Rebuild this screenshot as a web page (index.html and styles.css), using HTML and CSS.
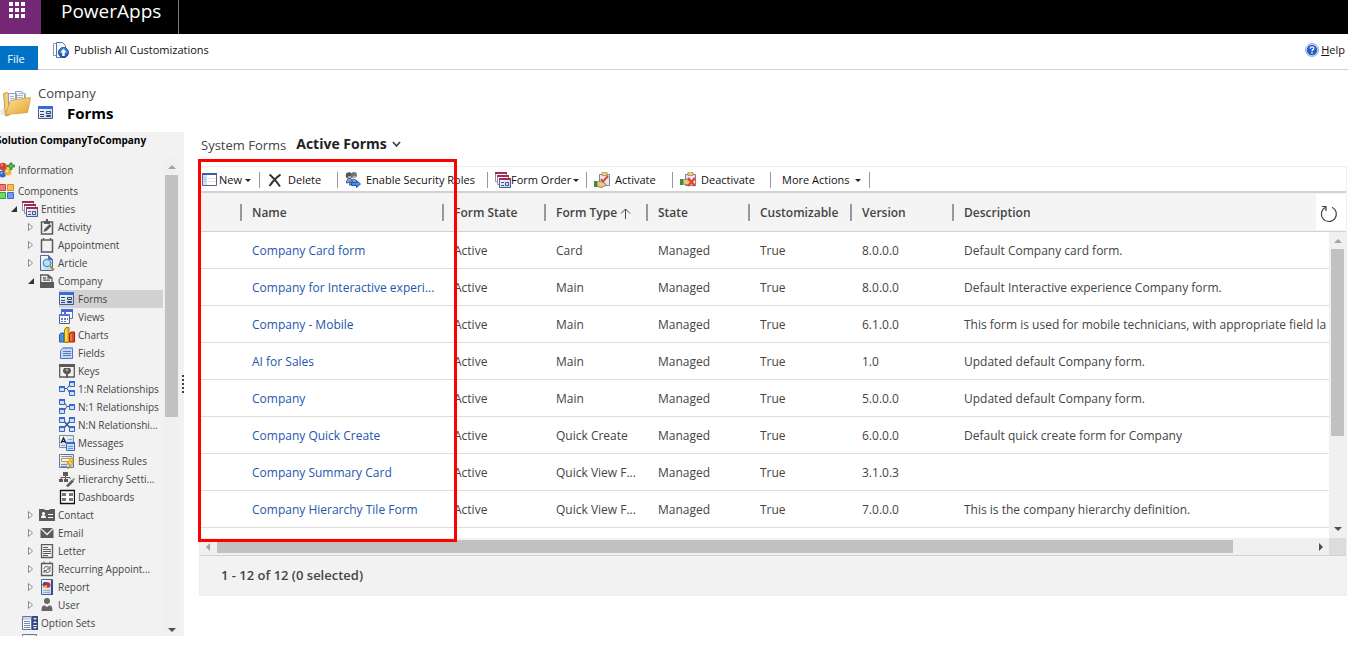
FILE: index.html
```html
<!DOCTYPE html>
<html lang="en">
<head>
<meta charset="utf-8">
<title>PowerApps - Solution CompanyToCompany</title>
<link rel="stylesheet" href="styles.css">
</head>
<body>
<svg class="defs" aria-hidden="true">
  <defs>
    <linearGradient id="gold" x1="0" y1="0" x2="1" y2="1"><stop offset="0" stop-color="#fbe3a0"/><stop offset="1" stop-color="#e3a52e"/></linearGradient>
    <linearGradient id="blue" x1="0" y1="0" x2="0" y2="1"><stop offset="0" stop-color="#5a94e4"/><stop offset="1" stop-color="#174fae"/></linearGradient>
    <linearGradient id="pane" x1="0" y1="0" x2="1" y2="1"><stop offset="0" stop-color="#ffffff"/><stop offset="1" stop-color="#bccdea"/></linearGradient>
  </defs>
  <symbol id="i-form" viewBox="0 0 16 16"><path fill="url(#pane)" stroke="#4a5f8f" d="M.5 1.500h14v12H.5z"/><path fill="#3a6bd8" d="M0 1h15v3H0z"/><path stroke="#33456b" fill="none" d="M2 6.500h4M2 9.500h4M2 11.500h4M8.500 6.500h4v2h-4zM8.500 10.500h4v1h-4z"/></symbol>
  <symbol id="i-info" viewBox="0 0 16 16"><path stroke="#8b4a30" stroke-width="2" d="M5 5v7M5 6l5 4"/><circle cx="4" cy="4.500" r="3.800" fill="#d8432b"/><circle cx="3" cy="3" r="1" fill="#f6a090"/><circle cx="3.500" cy="12" r="3.500" fill="#3b66c9"/><circle cx="2.500" cy="11" r="1" fill="#a6c0f7"/><circle cx="9" cy="10" r="3.500" fill="#f2b632"/><circle cx="8" cy="9" r="1" fill="#fff0bd"/><path fill="#5cc34d" stroke="#217a20" stroke-width=".8" d="M11 1h2v2h2.500v2H13v2.500h-2V5H8.500V3H11z"/></symbol>
  <symbol id="i-comp" viewBox="0 0 16 16"><path fill="#ef7a72" stroke="#c8443e" d="M-.5 1.500h7v6h-7z"/><path fill="#f8bf4d" stroke="#cf8f21" d="M8.500 1.500h6v6h-6z"/><path fill="#6fdc62" stroke="#35a436" d="M-.5 9.500h7v6h-7z"/><path fill="#6f9af5" stroke="#416dcc" d="M8.500 9.500h6v6h-6z"/></symbol>
  <symbol id="i-entities" viewBox="0 0 16 16"><path fill="#fff" stroke="#8d8fa8" d="M.5 .5h11v9H.5z"/><path fill="#a32958" d="M0 0h12v2H0z"/><path fill="#fff" stroke="#8d8fa8" d="M2.500 3.500h11v9h-11z"/><path fill="#a32958" d="M2 3h12v2H2z"/><path fill="url(#pane)" stroke="#4b5f95" d="M4.500 6.500h11v9h-11z"/><path fill="#a32958" d="M4 6h12v2H4z"/><path stroke="#41598f" fill="none" d="M6 10.500h3M6 13.500h3M10.500 10.500h3v3h-3z"/></symbol>
  <symbol id="i-activity" viewBox="0 0 16 16"><path fill="none" stroke="#5b5b5b" stroke-width="1.500" d="M2.500 3h11v12h-11z"/><path fill="#5b5b5b" d="M5 2h2V0h2v2h2v3H5zM4.500 13l1-3 5-5 2 2-5 5z"/></symbol>
  <symbol id="i-appt" viewBox="0 0 16 16"><path fill="none" stroke="#5b5b5b" stroke-width="1.500" d="M2.500 3h11v12h-11z"/><path stroke="#5b5b5b" stroke-width="1.500" d="M4.500 1v2M11.500 1v2"/></symbol>
  <symbol id="i-article" viewBox="0 0 16 16"><path fill="url(#pane)" stroke="#50699c" d="M1.500 .5h8l4 4v11h-12z"/><path fill="#5879b8" stroke="#50699c" d="M9.500.5v4h4z"/><circle cx="8" cy="8" r="3.700" fill="#a9e4f9" stroke="#5992b9" stroke-width="1.300"/><path stroke="#c58a2b" stroke-width="2" d="m11 11 4 4"/></symbol>
  <symbol id="i-company" viewBox="0 0 16 16"><path fill="#5b5b5b" d="M1 9h14v6H1z"/><path fill="none" stroke="#5b5b5b" stroke-width="1.300" d="M1.700 9V2H9l4 3v4M9 2v3h3M4 5h3M4 7.200h7"/></symbol>
  <symbol id="i-views" viewBox="0 0 16 16"><path fill="#fff" stroke="#5876b4" d="M2.500.5h11v9h-11z"/><path fill="#3a6bd8" d="M2 0h12v3H2z"/><path fill="#c13bb0" d="M5 3h2v2H5z"/><path fill="#fff" stroke="#45619c" d="M.5 5.500h10v9H.5z"/><path fill="#4b79dc" d="M0 5h11v2H0z"/><path fill="#6681bd" d="M2 9h2v2H2zM5 9h2v2H5zM8 9h1v2H8zM2 12h2v1H2zM5 12h2v1H5z"/></symbol>
  <symbol id="i-charts" viewBox="0 0 16 16"><path fill="#4a91d8" stroke="#255e9d" d="M.5 7.500 2 6h3v9H.5z"/><path fill="#e9bd1f" stroke="#a67b06" d="M5.500 2.500 7 .5h3v15H5.500z"/><path fill="#e34a22" stroke="#9c2609" d="M10.500 6.500 12 5h3.500v10h-5z"/><path stroke="#fff2a1" d="M7 3v11"/><path stroke="#ff9a77" d="M12 7v7"/></symbol>
  <symbol id="i-fields" viewBox="0 0 16 16"><path fill="#c6d8f6" stroke="#5272b5" d="M4.500 2.500h9v11H1.500v-8z"/><path fill="#7f9fdc" d="M4 2h10v2H3z"/><path stroke="#5577bb" d="M4 6.500h8M4 8.500h8M4 10.500h8"/></symbol>
  <symbol id="i-keys" viewBox="0 0 16 16"><path fill="none" stroke="#5b5b5b" stroke-width="1.300" d="M.7 2.500h14.600v11.500H.7z"/><path fill="#5b5b5b" d="M0 1h16v3H0zM5 5h6l1 2v2l-2 2H9v4H7v-4H6L4 9V7z"/><path fill="#fff" d="M7.500 6h1v2h-1z"/></symbol>
  <symbol id="i-rel-1n" viewBox="0 0 16 16"><path fill="none" stroke="#39538b" d="M5 7.500h3l3-4M8 7.500l3 5"/><path fill="#cfe0fb" stroke="#3966ba" d="M.5 5.500h5v5h-5zM10.500.5h5v5h-5zM10.500 9.500h5v5h-5z"/><path fill="#316bd3" d="M0 5h6v2H0zM10 0h6v2h-6zM10 9h6v2h-6z"/></symbol>
  <symbol id="i-rel-n1" viewBox="0 0 16 16"><path fill="none" stroke="#39538b" d="M5 3l3 4.500h3M5 12l3-4.500"/><path fill="#cfe0fb" stroke="#3966ba" d="M.5.5h5v5h-5zM.5 9.500h5v5h-5zM10.500 5.500h5v5h-5z"/><path fill="#316bd3" d="M0 0h6v2H0zM0 9h6v2H0zM10 5h6v2h-6z"/></symbol>
  <symbol id="i-rel-nn" viewBox="0 0 16 16"><path fill="none" stroke="#39538b" stroke-width="1.500" d="m4 3 8 9M12 3l-8 9"/><path fill="#cfe0fb" stroke="#3966ba" d="M.5.5h5v5h-5zM.5 9.500h5v5h-5zM10.500.5h5v5h-5zM10.500 9.500h5v5h-5z"/><path fill="#316bd3" d="M0 0h6v2H0zM0 9h6v2H0zM10 0h6v2h-6zM10 9h6v2h-6z"/></symbol>
  <symbol id="i-msg" viewBox="0 0 16 16"><path fill="url(#pane)" stroke="#7e8ba8" d="M.5 .5h14v12H.5z"/><path fill="none" stroke="#222" stroke-width="1.300" d="m2 8 2.500-5L7 8M3 6.500h3"/><path stroke="#8fa2c8" d="M9 4.500h4M2 10.500h4"/><path fill="#cfe0fb" stroke="#3966ba" d="M7.500 7.500h8v8h-8z"/><path fill="#316bd3" d="M7 7h9v2H7z"/><path stroke="#6f8fcc" d="M9 11.500h5M9 13.500h5"/></symbol>
  <symbol id="i-rules" viewBox="0 0 16 16"><path fill="url(#pane)" stroke="#65779f" d="M.5 1.500h14v13H.5z"/><path stroke="#7b8db3" d="M2 3.500h11M2 11.500h6M2 13.500h6"/><path fill="#fff3d9" stroke="#cf9238" d="M2.500 5.500h10v3h-10z"/><path fill="#ffd83c" stroke="#b57f10" stroke-width=".7" d="m12 5-4 6h3l-2 5 6-7h-3l3-4z"/></symbol>
  <symbol id="i-hier" viewBox="0 0 16 16"><path fill="#5b5b5b" d="M4 1h5v4H4zM0 8h4v3H0zM5 8h4v3H5z"/><path stroke="#5b5b5b" fill="none" d="M6.500 5v3M2 8V6.500h9V8"/><path stroke="#5b5b5b" stroke-width="2.500" d="m8 15.500 6-6"/><path stroke="#999" stroke-width="2" d="m13.500 9.500 2-2"/></symbol>
  <symbol id="i-dash" viewBox="0 0 16 16"><path fill="#fff" stroke="#111" stroke-width="1.300" d="M1.500 1.500h14v13h-14z"/><path fill="#777" d="M3 4h4v3H3zM10 4h4v3h-4zM3 9h4v3H3zM10 9h4v3h-4z"/></symbol>
  <symbol id="i-contact" viewBox="0 0 16 16"><path fill="#5b5b5b" d="M0 2h5l1 1h4l1-1h5v12H0z"/><circle cx="4.500" cy="6.500" r="1.600" fill="#fff"/><path fill="#fff" d="M2 11c0-4 5-4 5 0zM9 7h5v1H9zM9 10h5v1H9z"/></symbol>
  <symbol id="i-mail" viewBox="0 0 16 16"><path fill="#5b5b5b" d="M2 3h12L8 8.500zM1.500 4v9h13V4L8 10.500z"/></symbol>
  <symbol id="i-letter" viewBox="0 0 16 16"><path fill="none" stroke="#5b5b5b" stroke-width="1.300" d="M2.500 1.700h11v12.800h-11z"/><path stroke="#5b5b5b" d="M4 4.500h5M4 6.500h8M4 8.500h8M4 10.500h8M4 12.500h5"/></symbol>
  <symbol id="i-recur" viewBox="0 0 16 16"><path fill="none" stroke="#5b5b5b" stroke-width="1.300" d="M2.500 2.500h11v12h-11z"/><path stroke="#5b5b5b" fill="none" d="M5 .5v2M11 .5v2M5 8c0-3 4-3 5.500-1M11 5v3H8M11 9c0 3-4 3-5.500 1M5 12V9.500h3"/></symbol>
  <symbol id="i-report" viewBox="0 0 16 16"><path fill="url(#pane)" stroke="#4a6499" d="M2.500.5h11v15h-11z"/><path fill="#31508f" d="M12 1h2v15h-2z"/><ellipse cx="7.500" cy="6" rx="4" ry="3" fill="#d02b38"/><path fill="#3a50b4" d="M3.500 6c0-4 4-3 4-3v3z"/><path fill="#f1bd27" d="M7.500 6 4 7.500Q6 10 8.500 9z"/><path stroke="#9cabc8" d="M4 11.500h7M4 13.500h7"/></symbol>
  <symbol id="i-user" viewBox="0 0 16 16"><circle cx="8" cy="4" r="3" fill="#666"/><path fill="#666" d="M2.500 14c0-7 3-6 5.500-4 2.500-2 5.500-3 5.500 4z"/></symbol>
  <symbol id="i-options" viewBox="0 0 16 16"><path fill="#fff" stroke="#647698" d="M.5 1.500h9v13h-9z"/><path fill="#c8d7ef" d="M1 2h8v3H1z"/><path stroke="#758bb6" d="M2 6.500h6M2 8.500h6M2 10.500h6M2 12.500h6"/><path fill="#344b7d" d="M10 1h6v14h-6z"/><path fill="#dce6f7" d="m11 3h4l-2 2zM11 8l2-2 2 2zM11 10h4v1h-4zM11 12h4l-2 2z"/></symbol>
  <symbol id="i-folder" viewBox="0 0 32 32"><path fill="#d9d9d9" opacity=".6" d="M0 23 5 18v9H1z"/><path fill="#f0ce7a" stroke="#c89c45" d="m3.500 5.500 4-1 2 2V27l-4 1z"/><path fill="#f5f8fc" stroke="#91a0b5" d="M8.500 5.500h8v15h-8zM15.500 3.500h6l3 3v15h-9z"/><path fill="none" stroke="#a4b8d0" d="M17 7.500h6M17 9.500h6M10 8.500h4M10 10.500h4M18.500 5.500h7v7"/><path fill="url(#gold)" stroke="#d9a94c" d="m10.500 12.500 20-3-3 15-22 2z"/></symbol>
  <symbol id="i-publish" viewBox="0 0 16 16"><path fill="#fff" stroke="#8796b1" d="M.5 1.500h7v12h-7z"/><path fill="#f3f7ff" stroke="#5b719b" d="M3.500.5h6l3 3v12h-9z"/><circle cx="10.500" cy="10.500" r="5" fill="url(#blue)" stroke="#1c4d9f"/><path fill="#fff" d="m10.500 7 3.200 3.500h-2V14H9.300v-3.500h-2z"/></symbol>
  <symbol id="i-help" viewBox="0 0 16 16"><circle cx="8" cy="8" r="7.300" fill="#e8f0fd" stroke="#6e94d5"/><circle cx="8" cy="8" r="6" fill="#245ccc"/><path fill="none" stroke="#fff" stroke-width="1.500" d="M6 6.500c0-3 4.500-2.500 4 0C9.700 7.800 8 7.500 8 9.500M8 10.700v1.500"/></symbol>
  <symbol id="i-new" viewBox="0 0 16 16"><path fill="#fff" stroke="#4f6594" d="M.5 1.500h14v12H.5z"/><path fill="#3b5c9f" d="M0 1h15v2H0z"/><path fill="#d4e1f8" d="M1 3h4v10H1z"/><path stroke="#a8b9d9" d="M2 5.500h2M2 7.500h2M2 9.500h2"/><path stroke="#dfe5ef" d="M6 6.500h8M6 9.500h8"/></symbol>
  <symbol id="i-x" viewBox="0 0 16 16"><path fill="none" stroke="#333" stroke-width="2" d="M2.500 2.500q5 4 10.500 12M13.500 2.500q-7 5-11 11.500"/></symbol>
  <symbol id="i-roles" viewBox="0 0 16 16"><circle cx="4" cy="3.500" r="3.200" fill="#555"/><circle cx="9" cy="3" r="3" fill="#777"/><path fill="#aeb0b8" d="M3 4h3v2H3zM8 4h3v2H8z"/><path fill="#8ea7d6" stroke="#405c94" d="M1.500 11c0-6 6-6 6-1zM4.500 13c0-8 8-7 8-1z"/><path fill="#4a8dea" stroke="#1b55b4" d="M6.500 10.500h5v-2l4 3.500-4 3.500v-2h-5z"/></symbol>
  <symbol id="i-activate" viewBox="0 0 16 16"><path fill="#e4e9f4" stroke="#7c8496" d="M5.500 2.500h10v11h-10z"/><path fill="#e6cf8c" stroke="#9d7424" stroke-width=".6" d="M8 0h5v3.500H8z"/><path fill="none" stroke="#e04b29" stroke-width="2" d="m7 7 2 2.500L14 4"/><path fill="#e9c786" stroke="#875b26" stroke-width=".7" d="m3 10 3-1 5 2 1 2-4 2.500-5-1z"/><path fill="#3d8c4a" d="M0 9h3v6H0z"/></symbol>
  <symbol id="i-deactivate" viewBox="0 0 16 16"><path fill="#e4e9f4" stroke="#7c8496" d="M5.500 2.500h10v11h-10z"/><path fill="#e6cf8c" stroke="#9d7424" stroke-width=".6" d="M8 0h5v3.500H8z"/><path fill="#e9c786" stroke="#875b26" stroke-width=".7" d="m3 8 3-1 4 2 1 2-3 2-5-1z"/><path fill="#3d8c4a" d="M0 7h3v6H0z"/><path stroke="#e4452f" stroke-width="2.500" d="m8 6 7 8M15 6l-7 8"/></symbol>
  <symbol id="i-right" viewBox="0 0 8 10"><path fill="#fff" stroke="#8b8b8b" d="m1.500 1.500 4 3.500-4 3.500z"/></symbol>
  <symbol id="i-open" viewBox="0 0 8 10"><path fill="#333" d="M7 2v6H1z"/></symbol>
</svg>

<header class="topbar">
  <button class="waffle" aria-label="App launcher"><svg width="18" height="18" viewBox="0 0 18 18" fill="#fff"><path d="M1 1h4v4H1zM7 1h4v4H7zM13 1h4v4h-4zM1 7h4v4H1zM7 7h4v4H7zM13 7h4v4h-4zM1 13h4v4H1zM7 13h4v4H7zM13 13h4v4h-4z"/></svg></button>
  <a class="brand" href="#">PowerApps</a>
</header>

<nav class="ribbon">
  <button class="file">File</button>
  <button class="publish"><svg class="icon"><use href="#i-publish"/></svg>Publish All Customizations</button>
  <a class="help" href="#"><svg class="icon help-icon"><use href="#i-help"/></svg><span><u>H</u>elp</span></a>
</nav>

<div class="heading">
  <svg class="folder"><use href="#i-folder"/></svg>
  <div class="heading-text">
    <span class="entity">Company</span>
    <h1><svg class="icon"><use href="#i-form"/></svg>Forms</h1>
  </div>
</div>

<div class="workspace">
  <aside class="sidebar">
    <h2 class="solution"><span>Solution CompanyToCompany</span></h2>
    <div class="tree-wrap">
      <ul class="tree">
        <li class="l1 first"><svg class="icon"><use href="#i-info"/></svg><a href="#">Information</a></li>
        <li class="l1"><svg class="icon"><use href="#i-comp"/></svg><a href="#">Components</a></li>
        <li class="l2"><svg class="tw"><use href="#i-open"/></svg><svg class="icon"><use href="#i-entities"/></svg><a href="#">Entities</a></li>
        <li class="l3"><svg class="tw"><use href="#i-right"/></svg><svg class="icon"><use href="#i-activity"/></svg><a href="#">Activity</a></li>
        <li class="l3"><svg class="tw"><use href="#i-right"/></svg><svg class="icon"><use href="#i-appt"/></svg><a href="#">Appointment</a></li>
        <li class="l3"><svg class="tw"><use href="#i-right"/></svg><svg class="icon"><use href="#i-article"/></svg><a href="#">Article</a></li>
        <li class="l3"><svg class="tw"><use href="#i-open"/></svg><svg class="icon"><use href="#i-company"/></svg><a href="#">Company</a></li>
        <li class="l4 selected"><svg class="icon"><use href="#i-form"/></svg><a href="#">Forms</a></li>
        <li class="l4"><svg class="icon"><use href="#i-views"/></svg><a href="#">Views</a></li>
        <li class="l4"><svg class="icon"><use href="#i-charts"/></svg><a href="#">Charts</a></li>
        <li class="l4"><svg class="icon"><use href="#i-fields"/></svg><a href="#">Fields</a></li>
        <li class="l4"><svg class="icon"><use href="#i-keys"/></svg><a href="#">Keys</a></li>
        <li class="l4"><svg class="icon"><use href="#i-rel-1n"/></svg><a href="#">1:N Relationships</a></li>
        <li class="l4"><svg class="icon"><use href="#i-rel-n1"/></svg><a href="#">N:1 Relationships</a></li>
        <li class="l4"><svg class="icon"><use href="#i-rel-nn"/></svg><a href="#">N:N Relationshi...</a></li>
        <li class="l4"><svg class="icon"><use href="#i-msg"/></svg><a href="#">Messages</a></li>
        <li class="l4"><svg class="icon"><use href="#i-rules"/></svg><a href="#">Business Rules</a></li>
        <li class="l4"><svg class="icon"><use href="#i-hier"/></svg><a href="#">Hierarchy Setti...</a></li>
        <li class="l4"><svg class="icon"><use href="#i-dash"/></svg><a href="#">Dashboards</a></li>
        <li class="l3"><svg class="tw"><use href="#i-right"/></svg><svg class="icon"><use href="#i-contact"/></svg><a href="#">Contact</a></li>
        <li class="l3"><svg class="tw"><use href="#i-right"/></svg><svg class="icon"><use href="#i-mail"/></svg><a href="#">Email</a></li>
        <li class="l3"><svg class="tw"><use href="#i-right"/></svg><svg class="icon"><use href="#i-letter"/></svg><a href="#">Letter</a></li>
        <li class="l3"><svg class="tw"><use href="#i-right"/></svg><svg class="icon"><use href="#i-recur"/></svg><a href="#">Recurring Appoint...</a></li>
        <li class="l3"><svg class="tw"><use href="#i-right"/></svg><svg class="icon"><use href="#i-report"/></svg><a href="#">Report</a></li>
        <li class="l3"><svg class="tw"><use href="#i-right"/></svg><svg class="icon"><use href="#i-user"/></svg><a href="#">User</a></li>
        <li class="l2"><span class="tw"></span><svg class="icon"><use href="#i-options"/></svg><a href="#">Option Sets</a></li>
        <li class="l2"><span class="tw"></span><svg class="icon"><use href="#i-rules"/></svg></li>
      </ul>
      <div class="vbar"><i class="up"></i><div class="thumb tree-thumb"></div><i class="down"></i></div>
      <div class="splitter"></div>
    </div>
  </aside>

  <main class="content">
    <div class="view-title"><span>System Forms</span><button class="view">Active Forms<svg width="9" height="8" viewBox="0 0 9 8"><path d="m1 2 3.500 4L8 2" fill="none" stroke="#444" stroke-width="1.800"/></svg></button></div>
    <div class="card">
      <div class="toolbar">
        <button class="t-new"><svg class="icon"><use href="#i-new"/></svg>New<i class="caret"></i></button>
        <button class="t-delete"><svg class="icon"><use href="#i-x"/></svg>Delete</button>
        <button class="t-roles"><svg class="icon"><use href="#i-roles"/></svg>Enable Security Roles</button>
        <button class="t-order"><svg class="icon"><use href="#i-entities"/></svg>Form Order<i class="caret"></i></button>
        <button class="t-activate"><svg class="icon"><use href="#i-activate"/></svg>Activate</button>
        <button class="t-deactivate"><svg class="icon"><use href="#i-deactivate"/></svg>Deactivate</button>
        <button class="t-more">More Actions<i class="caret"></i></button>
      </div>
      <div class="grid">
        <div class="rows">
          <table>
            <colgroup><col class="c-check"><col class="c-name"><col class="c"><col class="c"><col class="c"><col class="c"><col class="c"><col></colgroup>
            <thead><tr><th aria-label="Select"></th><th>Name</th><th>Form State</th><th>Form Type <svg width="11" height="11" viewBox="0 0 11 11"><path d="M5.500 11V1M1 5.500 5.500 1 10 5.500" fill="none" stroke="#444"/></svg></th><th>State</th><th>Customizable</th><th>Version</th><th>Description</th></tr></thead>
            <tbody>
              <tr><td></td><td><a href="#">Company Card form</a></td><td>Active</td><td>Card</td><td>Managed</td><td>True</td><td>8.0.0.0</td><td>Default Company card form.</td></tr>
              <tr><td></td><td><a href="#">Company for Interactive experi...</a></td><td>Active</td><td>Main</td><td>Managed</td><td>True</td><td>8.0.0.0</td><td>Default Interactive experience Company form.</td></tr>
              <tr><td></td><td><a href="#">Company - Mobile</a></td><td>Active</td><td>Main</td><td>Managed</td><td>True</td><td>6.1.0.0</td><td>This form is used for mobile technicians, with appropriate field la</td></tr>
              <tr><td></td><td><a href="#">AI for Sales</a></td><td>Active</td><td>Main</td><td>Managed</td><td>True</td><td>1.0</td><td>Updated default Company form.</td></tr>
              <tr><td></td><td><a href="#">Company</a></td><td>Active</td><td>Main</td><td>Managed</td><td>True</td><td>5.0.0.0</td><td>Updated default Company form.</td></tr>
              <tr><td></td><td><a href="#">Company Quick Create</a></td><td>Active</td><td>Quick Create</td><td>Managed</td><td>True</td><td>6.0.0.0</td><td>Default quick create form for Company</td></tr>
              <tr><td></td><td><a href="#">Company Summary Card</a></td><td>Active</td><td>Quick View F...</td><td>Managed</td><td>True</td><td>3.1.0.3</td><td></td></tr>
              <tr><td></td><td><a href="#">Company Hierarchy Tile Form</a></td><td>Active</td><td>Quick View F...</td><td>Managed</td><td>True</td><td>7.0.0.0</td><td>This is the company hierarchy definition.</td></tr>
            </tbody>
          </table>
          <div class="hbar"><i class="left"></i><div class="hthumb"></div><i class="right"></i></div>
        </div>
        <div class="side">
          <div class="refresh-cell"><button class="refresh" aria-label="Refresh"><svg width="18" height="18" viewBox="0 0 18 18"><path d="M12 2.200A7.500 7.500 0 1 1 5.500 2.300M2 1.500h4V6" fill="none" stroke="#444" stroke-width="1.200"/></svg></button></div>
          <div class="vbar grid-vbar"><i class="up"></i><div class="thumb grid-thumb"></div><i class="down"></i></div>
          <div class="corner"></div>
        </div>
      </div>
      <footer class="status">1 - 12 of 12 (0 selected)</footer>
    </div>
    <div class="highlight"></div>
  </main>
</div>
</body>
</html>
```
FILE: styles.css
```css
* { box-sizing: border-box; }
body { margin: 0; background: #fff; color: #444; font: 11px/18px "Open Sans", "Noto Sans", sans-serif; overflow: hidden; }
button { border: 0; padding: 0; margin: 0; background: none; font: inherit; color: inherit; white-space: nowrap; }
a { color: inherit; text-decoration: none; }
h1, h2, ul { margin: 0; padding: 0; }
.defs { position: absolute; width: 0; height: 0; }
.icon { width: 16px; height: 16px; flex: none; }

.topbar { display: flex; height: 34px; background: #000; color: #fff; }
.waffle { width: 41px; background: #742774; display: flex; padding: 1px 0 0 8px; }
.brand { width: 138px; padding-left: 20px; border-right: 1px solid #777; font-size: 19px; line-height: 22px; }

.ribbon { display: flex; height: 36px; border-bottom: 1px solid #d2d2d2; color: #111; }
.file { width: 38px; height: 24px; margin-top: 12px; padding: 2px 6px 0 0; background: #0072c6; color: #fff; }
.publish { display: flex; align-items: center; gap: 5px; height: 32px; margin-left: 15px; }
.help { display: flex; align-items: center; gap: 2px; height: 32px; margin-left: auto; padding-right: 3px; }
.help-icon { width: 14px; height: 14px; }

.heading { display: flex; height: 62px; padding-top: 13px; }
.folder { width: 32px; height: 32px; margin-top: 5px; }
.heading-text { padding-left: 6px; }
.entity { display: block; font-size: 13px; line-height: 20px; }
h1 { display: flex; align-items: center; gap: 13px; font-size: 15px; line-height: 20px; color: #000; }

.workspace { display: flex; align-items: flex-start; }
.sidebar { width: 184px; flex: none; background: #f2f2f2; overflow: hidden; }
.solution { height: 26px; margin-left: -4px; font-size: 10px; line-height: 16px; color: #000; white-space: nowrap; }
.tree-wrap { position: relative; display: flex; height: 478px; }
.tree { width: 163px; padding-top: 2px; list-style: none; overflow: hidden; font-size: 10px; }
.tree li { display: flex; align-items: center; height: 18px; white-space: nowrap; }
.tree .first { height: 22px; padding-bottom: 2px; }
.tree .icon { margin-right: 3px; }
.tw { width: 8px; height: 10px; margin-right: 4px; flex: none; }
.l1 { margin-left: -1px; }
.l2 { margin-left: 10px; }
.l3 { margin-left: 27px; }
.l4 { margin-left: 59px; }
.selected { background: #d2d2d2; }
.splitter { position: absolute; right: 0; top: 217px; width: 2px; height: 19px; background: repeating-linear-gradient(#444 0 2px, transparent 2px 4px); }

.vbar { display: flex; flex-direction: column; align-items: center; width: 17px; padding: 7px 0 4px; background: #f0f0f0; }
.thumb { width: 13px; background: #c1c1c1; margin: 6px 0 auto; }
.tree-thumb { height: 242px; }
.up, .down, .left, .right { width: 0; height: 0; border: 4px solid transparent; }
.up { border-top: 0; border-bottom-color: #a3a3a3; }
.down { border-bottom: 0; border-top-color: #505050; }
.left { border-left: 0; border-right-color: #a3a3a3; }
.right { border-right: 0; border-left-color: #505050; }

.content { position: relative; flex: 1; min-width: 0; padding: 0 1px 0 15px; }
.view-title { display: flex; align-items: center; gap: 10px; height: 34px; padding: 0 0 8px 2px; font-size: 13px; }
.view { display: flex; align-items: center; gap: 5px; padding-bottom: 2px; font-size: 14px; font-weight: 700; color: #222; }
.card { border: 1px solid #eee; }
.toolbar { display: flex; align-items: center; height: 26px; padding-top: 2px; border-bottom: 2px solid #d2d2d2; color: #111; }
.toolbar button { display: flex; align-items: center; height: 16px; border-right: 1px solid #999; }
.caret { margin-left: 2px; border: 3px solid transparent; border-top-color: #222; border-bottom: 0; }
.t-new { width: 60px; padding-left: 2px; gap: 1px; }
.t-delete { width: 78px; padding-left: 7px; gap: 5px; }
.t-roles { width: 150px; padding-left: 7px; gap: 5px; }
.t-order { width: 99px; padding-left: 7px; }
.t-activate { width: 86px; padding-left: 7px; gap: 5px; }
.t-deactivate { width: 98px; padding-left: 7px; gap: 5px; }
.t-more { width: 99px; padding-left: 11px; gap: 3px; }

.grid { display: flex; }
.rows { flex: 1; min-width: 0; }
table { width: 100%; table-layout: fixed; border-collapse: separate; border-spacing: 0; font-size: 12px; background: #fff; }
.c-check { width: 42px; }
.c-name { width: 202px; }
.c { width: 102px; }
th { position: relative; height: 39px; padding: 2px 0 0 10px; border-bottom: 1px solid #d2d2d2; background: #f4f4f4; text-align: left; font-weight: 600; white-space: nowrap; }
th:not(:last-child)::after { content: ""; position: absolute; right: 0; top: 11px; width: 2px; height: 17px; background: #999; }
th svg { vertical-align: -2px; }
td { height: 37px; padding: 2px 0 0 10px; border-bottom: 1px solid #ddd; white-space: nowrap; overflow: hidden; }
td a { color: #1e56ad; }
.side { display: flex; flex-direction: column; width: 17px; }
.refresh-cell { display: flex; justify-content: flex-end; height: 39px; padding: 1px 0; background: #f4f4f4; border-bottom: 1px solid #d2d2d2; }
.refresh { position: relative; flex: none; display: flex; align-items: center; width: 30px; height: 36px; padding: 3px 0 0 4px; background: #fff; }
.grid-vbar { flex: 1; }
.grid-vbar .down { margin-bottom: 3px; }
.grid-thumb { height: 187px; }
.corner { height: 17px; background: #dcdcdc; }
.hbar { display: flex; align-items: center; height: 17px; margin-top: 10px; padding: 0 6px; background: #f0f0f0; }
.hthumb { width: 91%; height: 13px; margin: 0 auto 0 7px; background: #c1c1c1; }
.status { height: 40px; padding-left: 21px; border-top: 1px solid #d2d2d2; background: #f2f2f2; font-size: 13px; font-weight: 600; line-height: 39px; }
.highlight { position: absolute; left: 14px; top: 27px; width: 259px; height: 383px; border: 3px solid #f00; pointer-events: none; }
```
